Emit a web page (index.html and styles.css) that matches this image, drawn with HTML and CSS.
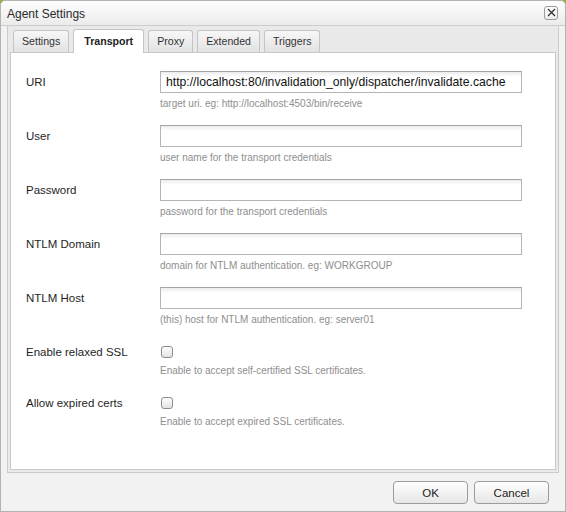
FILE: index.html
```html
<!DOCTYPE html>
<html>
<head>
<meta charset="utf-8">
<title>Agent Settings</title>
<link rel="stylesheet" href="styles.css">
</head>
<body>
<div class="dialog">
  <div class="header">
    <span class="title">Agent Settings</span>
    <span class="close"><svg width="9" height="9" viewBox="0 0 9 9"><path d="M1 1L8 8M8 1L1 8" stroke="#333" stroke-width="1.3" fill="none"/></svg></span>
  </div>
  <div class="frame">
    <div class="tabs">
      <div class="tab">Settings</div>
      <div class="tab active">Transport</div>
      <div class="tab">Proxy</div>
      <div class="tab">Extended</div>
      <div class="tab">Triggers</div>
    </div>
    <div class="panel">
      <div class="row">
        <div class="label">URI</div>
        <div class="field">
          <div class="input">http://localhost:80/invalidation_only/dispatcher/invalidate.cache</div>
          <div class="help">target uri. eg: http://localhost:4503/bin/receive</div>
        </div>
      </div>
      <div class="row">
        <div class="label">User</div>
        <div class="field">
          <div class="input"></div>
          <div class="help">user name for the transport credentials</div>
        </div>
      </div>
      <div class="row">
        <div class="label">Password</div>
        <div class="field">
          <div class="input"></div>
          <div class="help">password for the transport credentials</div>
        </div>
      </div>
      <div class="row">
        <div class="label">NTLM Domain</div>
        <div class="field">
          <div class="input"></div>
          <div class="help">domain for NTLM authentication. eg: WORKGROUP</div>
        </div>
      </div>
      <div class="row">
        <div class="label">NTLM Host</div>
        <div class="field">
          <div class="input"></div>
          <div class="help">(this) host for NTLM authentication. eg: server01</div>
        </div>
      </div>
      <div class="row check-row">
        <div class="label">Enable relaxed SSL</div>
        <div class="field">
          <div class="check-wrap"><span class="checkbox"></span></div>
          <div class="help">Enable to accept self-certified SSL certificates.</div>
        </div>
      </div>
      <div class="row check-row">
        <div class="label">Allow expired certs</div>
        <div class="field">
          <div class="check-wrap"><span class="checkbox"></span></div>
          <div class="help">Enable to accept expired SSL certificates.</div>
        </div>
      </div>
    </div>
  </div>
  <div class="footer">
    <button class="btn">OK</button>
    <button class="btn">Cancel</button>
  </div>
</div>
</body>
</html>
```
FILE: styles.css
```css
html { background: #8fb13c; }
body {
  margin: 0;
  width: 566px;
  height: 512px;
  font-family: "Liberation Sans", Arial, sans-serif;
  color: #222;
}
.dialog {
  box-sizing: border-box;
  width: 566px;
  height: 512px;
  border: 1px solid #b3b3b3;
  border-radius: 5px 5px 0 0;
  background: #f2f2f2;
  display: flex;
  flex-direction: column;
}
.header {
  height: 24px;
  border-bottom: 1px solid #cdcdcd;
  border-radius: 5px 5px 0 0;
  background: linear-gradient(#fefefe, #ebebeb);
  display: flex;
  align-items: center;
  justify-content: space-between;
  padding: 0 7px 0 6px;
}
.title {
  font-size: 12px;
  color: #2a2a2a;
  padding-top: 1px;
}
.close {
  box-sizing: border-box;
  width: 14px;
  height: 14px;
  border: 1px solid #9a9a9a;
  border-radius: 3px;
  background: linear-gradient(#ffffff, #ececec);
  display: flex;
  align-items: center;
  justify-content: center;
  margin-top: -1px;
}
.close svg { display: block; }
.frame {
  margin: 0 6px;
  height: 447px;
  box-sizing: border-box;
  border: 1px solid #cbcbcb;
  border-top: none;
  background: #e9e9e9;
  padding: 0 2px 2px 2px;
  display: flex;
  flex-direction: column;
}
.tabs {
  display: flex;
  align-items: flex-end;
  gap: 4px;
  height: 26px;
  padding-left: 3px;
}
.tab {
  box-sizing: border-box;
  height: 22px;
  padding: 0 8px;
  font-size: 10.6px;
  line-height: 21px;
  color: #333;
  border: 1px solid #c4c4c4;
  border-bottom: none;
  border-radius: 3px 3px 0 0;
  background: linear-gradient(#f7f7f7, #e2e2e2);
}
.tab.active {
  height: 24px;
  margin-bottom: -1px;
  position: relative;
  z-index: 1;
  background: #fff;
  font-weight: bold;
  color: #222;
  line-height: 23px;
  padding: 0 10px;
}
.panel {
  flex: 1;
  background: #fff;
  border: 1px solid #c9c9c9;
  padding: 18px 0 0 15px;
}
.row {
  display: flex;
  margin-bottom: 14px;
}
.label {
  width: 134px;
  font-size: 11.5px;
  height: 22px;
  line-height: 22px;
  color: #1e1e1e;
}
.field {
  display: flex;
  flex-direction: column;
}
.input {
  box-sizing: border-box;
  width: 362px;
  height: 22px;
  border: 1px solid #b5b5b5;
  border-top-color: #a5a5a5;
  background: linear-gradient(#ececec, #ffffff 5px);
  font-size: 12.2px;
  line-height: 20px;
  padding-left: 5px;
  color: #111;
  white-space: nowrap;
  overflow: hidden;
}
.help {
  font-size: 10px;
  color: #8e8e8e;
  height: 14px;
  line-height: 14px;
  margin-top: 4px;
}
.check-row { margin-bottom: 14px; }
.check-row .help { margin-top: 1px; }
.check-wrap {
  height: 22px;
  display: flex;
  align-items: center;
}
.checkbox {
  box-sizing: border-box;
  width: 12px;
  height: 12px;
  margin-left: 1px;
  border: 1px solid #8d8d8d;
  border-radius: 3px;
  background: linear-gradient(#fdfdfd, #e3e3e3);
}
.footer {
  flex: 1;
  display: flex;
  justify-content: flex-end;
  align-items: flex-start;
  gap: 6px;
  padding: 8px 16px 0 0;
}
.btn {
  box-sizing: border-box;
  width: 75px;
  height: 23px;
  border: 1px solid #9c9c9c;
  border-radius: 4px;
  background: linear-gradient(#ffffff, #e6e6e6);
  font-family: "Liberation Sans", Arial, sans-serif;
  font-size: 11.5px;
  color: #222;
  padding: 0;
}
```
